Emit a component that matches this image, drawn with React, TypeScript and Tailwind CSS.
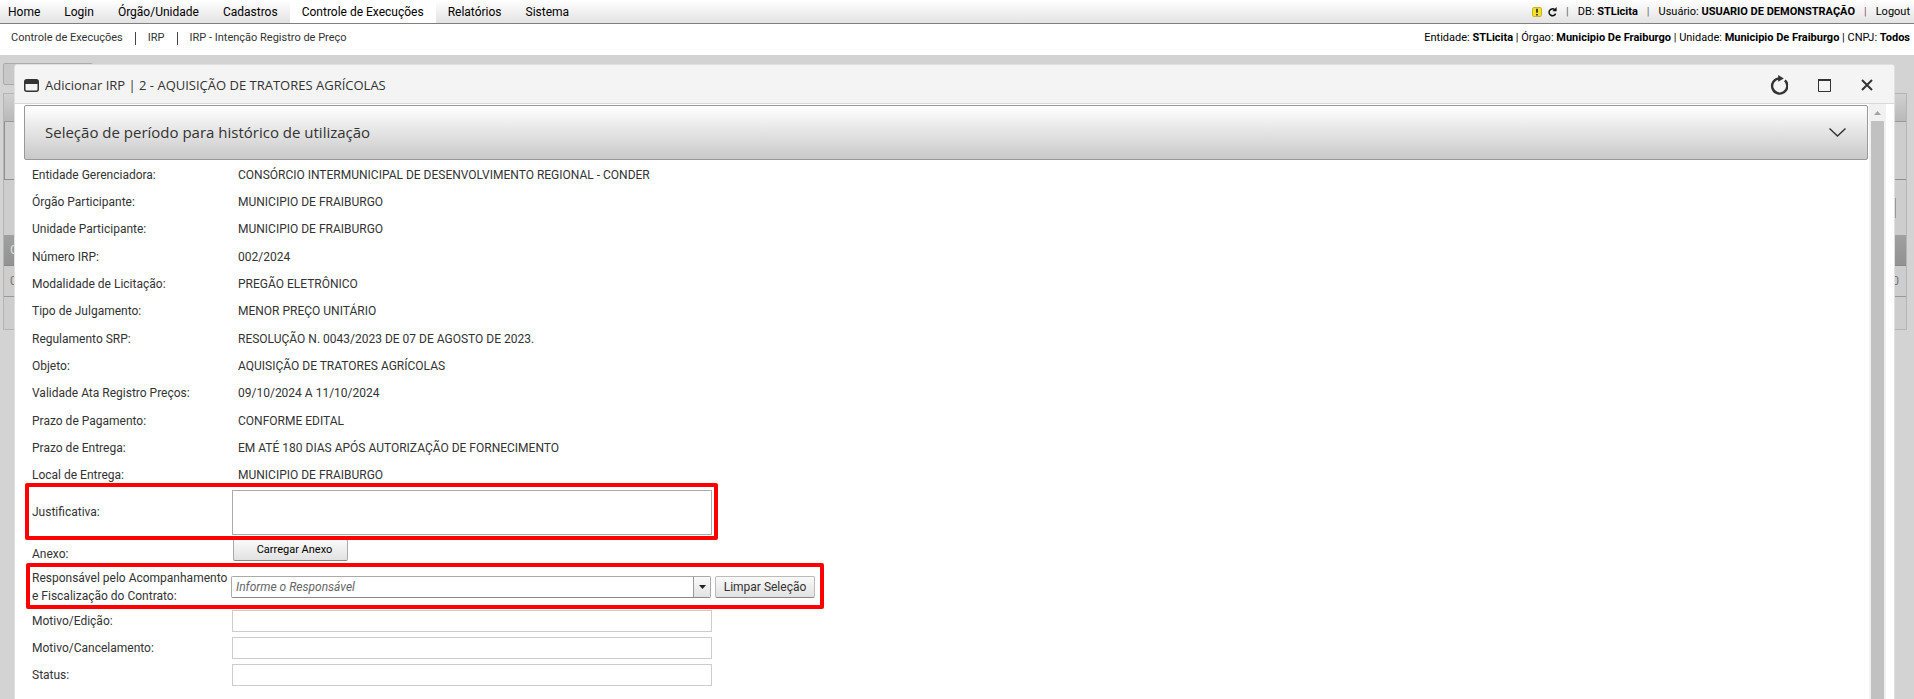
const menu = [
  "Home",
  "Login",
  "Órgão/Unidade",
  "Cadastros",
  "Controle de Execuções",
  "Relatórios",
  "Sistema",
];

const details = [
  { label: "Entidade Gerenciadora:", value: "CONSÓRCIO INTERMUNICIPAL DE DESENVOLVIMENTO REGIONAL - CONDER" },
  { label: "Órgão Participante:", value: "MUNICIPIO DE FRAIBURGO" },
  { label: "Unidade Participante:", value: "MUNICIPIO DE FRAIBURGO" },
  { label: "Número IRP:", value: "002/2024" },
  { label: "Modalidade de Licitação:", value: "PREGÃO ELETRÔNICO" },
  { label: "Tipo de Julgamento:", value: "MENOR PREÇO UNITÁRIO" },
  { label: "Regulamento SRP:", value: "RESOLUÇÃO N. 0043/2023 DE 07 DE AGOSTO DE 2023." },
  { label: "Objeto:", value: "AQUISIÇÃO DE TRATORES AGRÍCOLAS" },
  { label: "Validade Ata Registro Preços:", value: "09/10/2024 A 11/10/2024" },
  { label: "Prazo de Pagamento:", value: "CONFORME EDITAL" },
  { label: "Prazo de Entrega:", value: "EM ATÉ 180 DIAS APÓS AUTORIZAÇÃO DE FORNECIMENTO" },
  { label: "Local de Entrega:", value: "MUNICIPIO DE FRAIBURGO" },
];

const extraFields = [
  { id: "motivo-edicao", label: "Motivo/Edição:" },
  { id: "motivo-cancelamento", label: "Motivo/Cancelamento:" },
  { id: "status", label: "Status:" },
];

function ReloadIcon({ className }: { className?: string }) {
  return (
    <svg viewBox="0 0 18 20" className={className} fill="none">
      <path d="M14.9 5.4A7.6 7.6 0 1 1 9 3.4" stroke="currentColor" strokeWidth="2.4" />
      <path d="M8.2 0l5.6 3.4-5.6 3.4z" fill="currentColor" />
    </svg>
  );
}

function TopBar() {
  return (
    <header className="flex h-6 items-stretch justify-between border-b border-[#7f7f7f] bg-linear-to-b from-white to-[#e3e3e3] text-[12px] text-black">
      <nav className="flex">
        {menu.map((item) => (
          <a
            key={item}
            href="#"
            className={
              item === "Controle de Execuções"
                ? "flex items-center bg-white px-3"
                : item === "Home"
                  ? "flex items-center pr-3 pl-2"
                  : "flex items-center px-3"
            }
          >
            {item}
          </a>
        ))}
      </nav>
      <div className="flex items-center gap-[9px] pr-1 text-[11px] leading-[22px]">
        <div className="flex items-center gap-[6px]">
          <svg viewBox="0 0 10 10" className="size-[10px]">
            <rect x="0.5" y="0.5" width="9" height="9" rx="1.5" fill="#f2e12c" stroke="#c9b42a" />
            <path d="M5 1.8v4M5 7v1.4" stroke="#222" strokeWidth="1.6" />
          </svg>
          <svg viewBox="0 0 9 10" className="h-[10px] w-[9px]" fill="none">
            <path d="M6.6 2.6A3.4 3.4 0 1 0 7.6 6.6" stroke="#111" strokeWidth="1.5" />
            <path d="M8.6 0v4.2H4.4z" fill="#111" />
          </svg>
        </div>
        <span className="text-[#666]">|</span>
        <span>
          DB: <b>STLicita</b>
        </span>
        <span className="text-[#666]">|</span>
        <span>
          Usuário: <b>USUARIO DE DEMONSTRAÇÃO</b>
        </span>
        <span className="text-[#955]">|</span>
        <a href="#">Logout</a>
      </div>
    </header>
  );
}

function Breadcrumb() {
  return (
    <div className="flex h-[31px] items-start justify-between bg-white pt-[5px] pr-1 pl-[11px] text-[11px] leading-[18px]">
      <nav className="flex items-center gap-3 text-[#333]">
        <a href="#">Controle de Execuções</a>
        <span className="h-[13px] w-px bg-[#444]" />
        <a href="#">IRP</a>
        <span className="h-[13px] w-px bg-[#444]" />
        <a href="#">IRP - Intenção Registro de Preço</a>
      </nav>
      <p className="text-black">
        Entidade: <b>STLicita</b> | Órgao: <b>Municipio De Fraiburgo</b> | Unidade:{" "}
        <b>Municipio De Fraiburgo</b> | CNPJ: <b>Todos</b>
      </p>
    </div>
  );
}

// Listing page, dimmed behind the window
function Backdrop() {
  return (
    <div className="pt-2 pr-[7px] pl-[3px] text-[12px] text-[#777]" aria-hidden="true">
      <div className="h-[22px] w-[90px] rounded-xs border border-[#aaa] bg-[#c8c8c8]" />
      <div className="mt-2 border border-[#b5b5b5] bg-[#cdcdcd]">
        <div className="h-7 border-b border-[#999] bg-linear-to-b from-[#d0d0d0] to-[#b9b9b9]" />
        <div className="h-[58px] border-b border-l border-[#8f8f8f]" />
        <div className="flex h-[55px] items-center justify-end pr-[10px]">
          <div className="h-5 w-10 border-r border-[#999]" />
        </div>
        <div className="flex h-[31px] items-center border-b border-[#888] bg-linear-to-b from-[#a0a0a0] to-[#929292] pl-[6px] text-[#ddd]">
          C
        </div>
        <div className="flex h-[31px] items-center justify-between border-b border-[#999] pr-[7px] pl-[6px]">
          <span>0</span>
          <span>0</span>
        </div>
        <div className="h-8" />
      </div>
    </div>
  );
}

function WindowHeader() {
  return (
    <div className="flex h-[39px] items-center justify-between border-b border-[#d9d9d9] bg-[#f4f4f4] pr-[21px] pl-[9px] text-[#333]">
      <div className="flex items-center gap-[6px] pt-[3px]">
        <svg viewBox="0 0 15 13" className="h-[13px] w-[15px]" fill="none">
          <rect x="0.75" y="0.75" width="13.5" height="11.5" rx="2" stroke="#333" strokeWidth="1.5" />
          <path d="M1 1h13v4H1z" fill="#333" />
        </svg>
        <h1 className="font-['Open_Sans',sans-serif] text-[13px]">
          Adicionar IRP | 2 - AQUISIÇÃO DE TRATORES AGRÍCOLAS
        </h1>
      </div>
      <div className="flex items-center gap-[30px] pt-[2px]">
        <button type="button" aria-label="Recarregar">
          <ReloadIcon className="h-5 w-[18px]" />
        </button>
        <button type="button" aria-label="Maximizar">
          <svg viewBox="0 0 13 13" className="size-[13px]" fill="none">
            <path d="M.5 1v11.5h12V1" stroke="#333" />
            <path d="M0 1h13" stroke="#333" strokeWidth="2" />
          </svg>
        </button>
        <button type="button" aria-label="Fechar">
          <svg viewBox="0 0 12 12" className="size-3" fill="none">
            <path d="M1 1l10 10M11 1L1 11" stroke="#333" strokeWidth="2" />
          </svg>
        </button>
      </div>
    </div>
  );
}

function IrpForm() {
  return (
    <form className="pt-px pl-2 text-[12px] text-[#333]">
      <dl className="grid h-[328px] auto-rows-fr">
        {details.map((el) => (
          <div key={el.label} className="flex items-center">
            <dt className="w-[206px] shrink-0">{el.label}</dt>
            <dd>{el.value}</dd>
          </div>
        ))}
      </dl>

      <div className="relative flex h-[46px] items-center">
        <label htmlFor="justificativa" className="w-[200px] shrink-0">
          Justificativa:
        </label>
        <textarea
          id="justificativa"
          className="h-[45px] w-[480px] resize-none border border-[#aaa] bg-white"
        />
        <div className="pointer-events-none absolute -top-[6px] -left-[7px] h-[57px] w-[693px] rounded-xs border-4 border-[#f00]" />
      </div>

      <div className="flex h-[34px] items-center pb-1">
        <span className="w-[201px] shrink-0 pt-2">Anexo:</span>
        <button
          type="button"
          className="h-[22px] w-[115px] rounded-xs border border-[#aaa] border-b-[#888] bg-linear-to-b from-[#fafafa] to-[#e2e2e2] pl-2 text-[11px] text-black"
        >
          Carregar Anexo
        </button>
      </div>

      <div className="relative flex h-9 items-center">
        <label htmlFor="responsavel" className="w-[199px] shrink-0 leading-[18px] whitespace-nowrap">
          Responsável pelo Acompanhamento
          <br />e Fiscalização do Contrato:
        </label>
        <div className="flex h-[22px] w-[480px] overflow-hidden rounded-xs border border-[#aaa] border-b-[#888]">
          <input
            id="responsavel"
            type="text"
            placeholder="Informe o Responsável"
            className="min-w-0 flex-1 bg-white px-1 italic placeholder:text-[#666]"
          />
          <button
            type="button"
            aria-label="Abrir lista"
            className="flex w-[17px] items-center justify-center border-l border-[#999] bg-linear-to-b from-[#fafafa] to-[#e2e2e2]"
          >
            <svg viewBox="0 0 7 4" className="h-1 w-[7px]">
              <path d="M0 0h7L3.5 4z" fill="#222" />
            </svg>
          </button>
        </div>
        <button
          type="button"
          className="ml-1 h-[22px] w-[100px] rounded-xs border border-[#bbb] border-b-[#888] bg-linear-to-b from-[#fafafa] to-[#e2e2e2]"
        >
          Limpar Seleção
        </button>
        <div className="pointer-events-none absolute -top-[6px] -left-[6px] h-[46px] w-[798px] rounded-xs border-4 border-[#f00]" />
      </div>

      <div className="grid h-[84px] auto-rows-fr pt-[2px]">
        {extraFields.map((el) => (
          <div key={el.id} className="flex items-center">
            <label htmlFor={el.id} className="w-[200px] shrink-0">
              {el.label}
            </label>
            <input id={el.id} type="text" className="h-[22px] w-[480px] border border-[#ccc] bg-white" />
          </div>
        ))}
      </div>
    </form>
  );
}

export default function App() {
  return (
    <div className="flex h-screen flex-col overflow-hidden bg-[#d3d3d3] font-[Roboto,'Open_Sans',sans-serif]">
      <TopBar />
      <Breadcrumb />
      <main className="relative flex-1">
        <Backdrop />
        <section className="absolute top-[9px] right-[19px] bottom-0 left-[14px] flex flex-col overflow-hidden rounded-t-sm border-x border-t border-[#e0e0e0] bg-white">
          <WindowHeader />
          <div className="flex min-h-0 flex-1 pr-2 pl-[9px]">
            <div className="min-w-0 flex-1 pt-px">
              <button
                type="button"
                className="flex h-[55px] w-full items-center justify-between rounded-xs border border-[#999] bg-linear-to-b from-white to-[#c9c9c9] pr-[21px] pl-5 font-['Open_Sans',sans-serif] text-[15px] text-[#333]"
              >
                Seleção de período para histórico de utilização
                <svg viewBox="0 0 17 9" className="h-[9px] w-[17px]" fill="none">
                  <path d="M.5.5l8 7.5 8-7.5" stroke="#333" strokeWidth="1.4" />
                </svg>
              </button>
              <IrpForm />
            </div>
            <div className="ml-px flex w-[17px] flex-col items-center bg-[#f1f1f1]">
              <svg viewBox="0 0 17 17" className="size-[17px] shrink-0">
                <path d="M5 11h7L8.5 7z" fill="#a3a3a3" />
              </svg>
              <div className="w-[13px] flex-1 bg-[#c1c1c1]" />
            </div>
          </div>
        </section>
      </main>
    </div>
  );
}
